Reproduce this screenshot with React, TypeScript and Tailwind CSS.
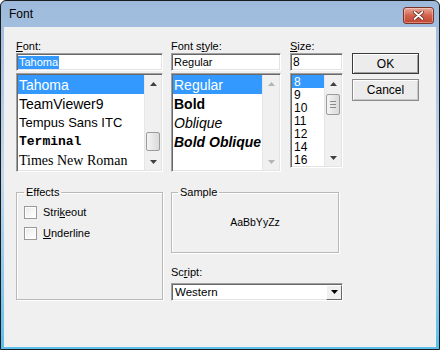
import React from "react";

const UI = { fontFamily: '"Liberation Sans", Arial, sans-serif' };

const sunken =
  "border border-t-[#a0a0a0] border-l-[#a0a0a0] border-r-white border-b-white shadow-[inset_1px_1px_0_#696969,inset_-1px_-1px_0_#e3e3e3]";

function Arrow({ up = true, color = "#404040" }: { up?: boolean; color?: string }) {
  return (
    <svg width="7" height="4" viewBox="0 0 7 4">
      <path d={up ? "M3.5 0L7 4H0z" : "M0 0h7L3.5 4z"} fill={color} />
    </svg>
  );
}

function ScrollBar({
  thumbTop,
  thumbH,
  disabled,
  grip,
}: {
  thumbTop?: number;
  thumbH?: number;
  disabled?: boolean;
  grip?: boolean;
}) {
  const c = disabled ? "#b4b4b4" : "#404040";
  return (
    <div className="flex w-[17px] flex-col bg-[#f0f0f0] border-l border-[#e6e6e6]">
      <div className="flex h-[17px] items-center justify-center">
        <Arrow color={c} />
      </div>
      <div className="flex-1 px-[1px]">
        {thumbH ? (
          <div
            className="flex flex-col items-center justify-center gap-[2px] rounded-[2px] border border-[#9b9b9b] bg-gradient-to-r from-[#f4f4f4] to-[#dadada]"
            style={{ marginTop: thumbTop, height: thumbH }}
          >
            {grip && (
              <>
                <div className="h-[1px] w-[6px] bg-[#8a8a8a]" />
                <div className="h-[1px] w-[6px] bg-[#8a8a8a]" />
                <div className="h-[1px] w-[6px] bg-[#8a8a8a]" />
              </>
            )}
          </div>
        ) : null}
      </div>
      <div className="flex h-[17px] items-center justify-center">
        <Arrow up={false} color={c} />
      </div>
    </div>
  );
}

function Label({ text, u }: { text: string; u: number }) {
  return (
    <div className="h-[14px] text-[11px] leading-[14px] text-black">
      {text.slice(0, u)}
      <span className="underline underline-offset-[1px]">{text[u]}</span>
      {text.slice(u + 1)}
    </div>
  );
}

const FONTS = [
  { name: "Tahoma", cls: "text-[14px]", ff: '"Liberation Sans", sans-serif' },
  { name: "TeamViewer9", cls: "text-[14px]", ff: '"Liberation Sans", sans-serif' },
  { name: "Tempus Sans ITC", cls: "text-[13px] text-[#333]", ff: '"Liberation Sans", sans-serif' },
  { name: "Terminal", cls: "text-[13px] font-bold", ff: '"Liberation Mono", monospace' },
  { name: "Times New Roman", cls: "text-[14px]", ff: '"Liberation Serif", serif' },
];

const STYLES = [
  { name: "Regular", cls: "" },
  { name: "Bold", cls: "font-bold" },
  { name: "Oblique", cls: "italic" },
  { name: "Bold Oblique", cls: "font-bold italic" },
];

const SIZES = ["8", "9", "10", "11", "12", "14", "16"];

function Checkbox({ text, u }: { text: string; u: number }) {
  return (
    <div className="flex h-[13px] items-center gap-[6px]">
      <div className="h-[13px] w-[13px] border border-[#9a9a9a] bg-white p-[1px]">
        <div className="h-full w-full bg-gradient-to-br from-[#ececec] to-white" />
      </div>
      <span className="text-[11px] leading-[13px]">
        {text.slice(0, u)}
        <span className="underline underline-offset-[1px]">{text[u]}</span>
        {text.slice(u + 1)}
      </span>
    </div>
  );
}

export default function App() {
  return (
    <div className="h-[351px] w-[441px] bg-white" style={UI}>
      <div className="flex h-[350px] w-[440px] flex-col rounded-t-[6px] border border-[#1a1a1a] bg-gradient-to-b from-[#9dbadc] via-[#c2d7ee] to-[#5cbfec]">
        {/* title bar */}
        <div className="flex h-[26px] items-center justify-between pl-[8px] pr-[5px]">
          <span className="text-[12px] text-black">Font</span>
          <div className="mt-[3px] flex h-[17px] w-[31px] items-center justify-center rounded-[3px] border border-[#7a3326] bg-gradient-to-b from-[#e9a99a] via-[#d2624c] to-[#c2452f] shadow-[inset_0_0_0_1px_rgba(255,255,255,0.35)]">
            <svg width="11" height="9" viewBox="0 0 11 9">
              <path d="M1.5 1L9.5 8M9.5 1L1.5 8" stroke="#5a2218" strokeWidth="3.4" strokeLinecap="round" />
              <path d="M1.5 1L9.5 8M9.5 1L1.5 8" stroke="#fff" strokeWidth="1.8" strokeLinecap="round" />
            </svg>
          </div>
        </div>

        {/* body */}
        <div className="mx-[3px] mb-[2px] flex flex-1 flex-col bg-[#f0f0f0] pl-[12px] pt-[12px]">
          <div className="flex items-start">
            {/* Font */}
            <div className="flex w-[147px] flex-col">
              <Label text="Font:" u={0} />
              <div className={`${sunken} flex h-[18px] items-center bg-white pl-[1px]`}>
                <span className="bg-[#3399ff] px-[1px] text-[11px] leading-[13px] text-white">Tahoma</span>
              </div>
              <div className={`${sunken} mt-[2px] flex h-[99px] bg-white p-[1px]`}>
                <div className="flex flex-1 flex-col">
                  {FONTS.map((f, i) => (
                    <div
                      key={f.name}
                      className={`flex h-[19px] items-center whitespace-nowrap pl-[1px] leading-none ${f.cls} ${
                        i === 0 ? "bg-[#3399ff] text-white" : "text-black"
                      }`}
                      style={{ fontFamily: f.ff }}
                    >
                      {f.name}
                    </div>
                  ))}
                </div>
                <ScrollBar thumbTop={40} thumbH={19} />
              </div>
            </div>

            {/* Font style */}
            <div className="ml-[8px] flex w-[110px] flex-col">
              <Label text="Font style:" u={6} />
              <div className={`${sunken} flex h-[18px] items-center bg-white pl-[2px]`}>
                <span className="text-[11px] leading-[13px]">Regular</span>
              </div>
              <div className={`${sunken} mt-[2px] flex h-[99px] bg-white p-[1px]`}>
                <div className="flex flex-1 flex-col">
                  {STYLES.map((s, i) => (
                    <div
                      key={s.name}
                      className={`flex h-[19px] items-center whitespace-nowrap pl-[1px] text-[14px] leading-none ${s.cls} ${
                        i === 0 ? "bg-[#3399ff] text-white" : "text-black"
                      }`}
                    >
                      {s.name}
                    </div>
                  ))}
                </div>
                <ScrollBar disabled />
              </div>
            </div>

            {/* Size */}
            <div className="ml-[9px] flex w-[53px] flex-col">
              <Label text="Size:" u={0} />
              <div className={`${sunken} flex h-[18px] items-center bg-white pl-[2px]`}>
                <span className="text-[12px] leading-[13px]">8</span>
              </div>
              <div className={`${sunken} mt-[2px] flex h-[95px] bg-white p-[1px]`}>
                <div className="flex flex-1 flex-col">
                  {SIZES.map((s, i) => (
                    <div
                      key={s}
                      className={`flex h-[13px] items-center pl-[2px] text-[12px] leading-none ${
                        i === 0 ? "bg-[#3399ff] text-white" : "text-black"
                      }`}
                    >
                      {s}
                    </div>
                  ))}
                </div>
                <ScrollBar thumbTop={2} thumbH={21} grip />
              </div>
            </div>

            {/* Buttons */}
            <div className="ml-[9px] flex w-[67px] flex-col gap-[5px] pt-[14px]">
              <div className="flex h-[21px] items-center justify-center border border-[#3a3a3a] bg-[#ececec] text-[12px] shadow-[inset_1px_1px_0_#fff,inset_-1px_-1px_0_#a0a0a0]">
                OK
              </div>
              <div className="flex h-[22px] items-center justify-center border border-[#8c8c8c] bg-[#ececec] text-[12px] shadow-[inset_1px_1px_0_#fff,inset_-1px_-1px_0_#c8c8c8]">
                Cancel
              </div>
            </div>
          </div>

          <div className="mt-[14px] flex items-start">
            {/* Effects */}
            <fieldset className="h-[114px] w-[147px] border border-[#b9b9b9] shadow-[1px_1px_0_#fff,inset_1px_1px_0_#fff]">
              <legend className="ml-[7px] px-[2px] text-[11px] leading-[13px]">Effects</legend>
              <div className="flex flex-col gap-[8px] pl-[7px] pt-[7px]">
                <Checkbox text="Strikeout" u={4} />
                <Checkbox text="Underline" u={0} />
              </div>
            </fieldset>

            <div className="ml-[8px] flex flex-col">
              {/* Sample */}
              <fieldset className="h-[67px] w-[168px] border border-[#b9b9b9] shadow-[1px_1px_0_#fff,inset_1px_1px_0_#fff]">
                <legend className="ml-[6px] px-[2px] text-[11px] leading-[13px]">Sample</legend>
                <div className="flex h-[52px] items-center justify-center pb-[4px] text-[10.5px]">AaBbYyZz</div>
              </fieldset>

              <div className="mt-[13px] h-[13px] text-[11px] leading-[13px]">
                Sc<span className="underline underline-offset-[1px]">r</span>ipt:
              </div>
              <div className={`${sunken} mt-[4px] flex h-[18px] w-[172px] items-center bg-white pl-[3px]`}>
                <span className="flex-1 text-[11.5px] leading-[13px]">Western</span>
                <div className="flex h-[15px] w-[16px] items-center justify-center border border-t-white border-l-white border-r-[#696969] border-b-[#696969] bg-[#f0f0f0]">
                  <svg width="7" height="4" viewBox="0 0 7 4">
                    <path d="M0 0h7L3.5 4z" fill="#000" />
                  </svg>
                </div>
              </div>
            </div>
          </div>
        </div>
      </div>
    </div>
  );
}
